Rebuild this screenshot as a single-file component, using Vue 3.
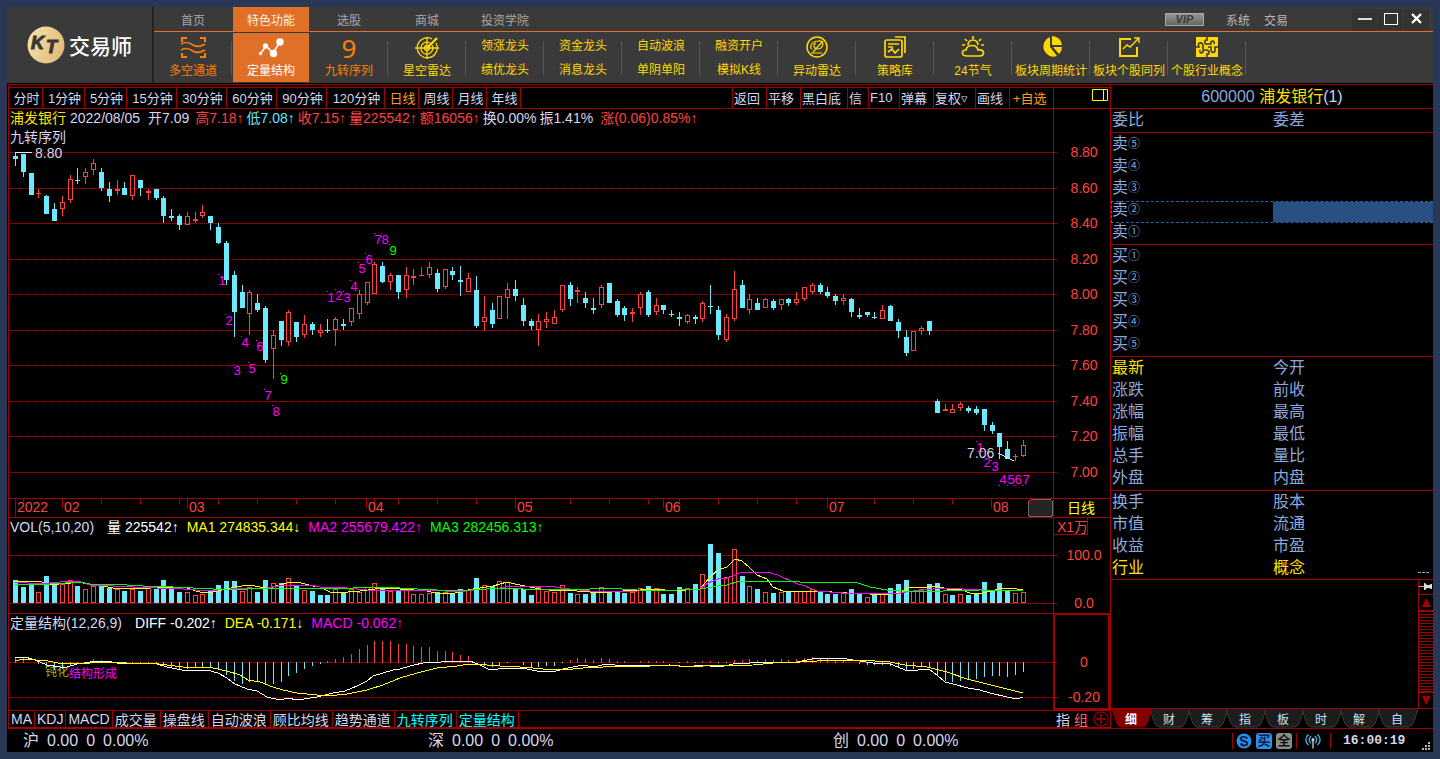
<script setup>
const navTabs = ['首页', '特色功能', '选股', '商城', '投资学院']

const tiles = [
  { icon: 'channel', label: '多空通道', tone: 'orange' },
  { icon: 'nodes', label: '定量结构', tone: 'active' },
  { icon: 'nine', label: '九转序列', tone: 'orange' },
  { icon: 'radar', label: '星空雷达' },
  { lines: ['领涨龙头', '绩优龙头'] },
  { lines: ['资金龙头', '消息龙头'] },
  { lines: ['自动波浪', '单阴单阳'] },
  { lines: ['融资开户', '模拟K线'] },
  { icon: 'alert', label: '异动雷达' },
  { icon: 'library', label: '策略库' },
  { icon: 'weather', label: '24节气' },
  { icon: 'pie', label: '板块周期统计' },
  { icon: 'trend', label: '板块个股同列' },
  { icon: 'puzzle', label: '个股行业概念' }
]

const periods = [
  ['分时', 'w34'], ['1分钟', 'w42'], ['5分钟', 'w42'], ['15分钟', 'w50'], ['30分钟', 'w50'],
  ['60分钟', 'w50'], ['90分钟', 'w50'], ['120分钟', 'w58'], ['日线', 'w34 on'],
  ['周线', 'w34'], ['月线', 'w34'], ['年线', 'w34']
]
const actions = [
  ['返回', 'w34'], ['平移', 'w34'], ['黑白底', 'w47'], ['信', 'w21'], ['F10', 'w31'],
  ['弹幕', 'w34'], ['复权▿', 'w42'], ['画线', 'w34'], ['+自选', 'w44 on']
]

/* [direction, high, body top, body bottom, low]; 0 = down, 1 = up */
const candles = [
  [0, 152, 156, 159, 166], [0, 154, 154, 172, 177], [0, 173, 173, 195, 195], [1, 189, 193, 194, 198], [0, 195, 196, 214, 214],
  [0, 203, 209, 221, 221], [1, 196, 202, 209, 216], [1, 175, 179, 200, 203], [0, 168, 180, 181, 184], [1, 168, 172, 177, 184],
  [1, 159, 163, 170, 175], [0, 168, 172, 188, 191], [0, 182, 189, 196, 202], [1, 180, 189, 191, 195], [0, 182, 188, 195, 195],
  [1, 175, 175, 196, 200], [0, 180, 180, 188, 196], [1, 189, 191, 193, 200], [0, 189, 189, 198, 200], [0, 196, 198, 216, 223],
  [0, 209, 216, 218, 221], [0, 214, 216, 225, 230], [1, 212, 216, 225, 225], [1, 212, 219, 221, 223], [1, 205, 212, 216, 218],
  [0, 216, 216, 223, 230], [0, 223, 227, 243, 244], [0, 241, 243, 280, 285], [0, 271, 275, 312, 337], [0, 285, 292, 308, 308],
  [1, 290, 292, 314, 335], [0, 294, 303, 310, 312], [0, 306, 308, 360, 363], [1, 330, 335, 349, 379], [0, 321, 321, 340, 346],
  [1, 310, 312, 342, 346], [0, 322, 322, 337, 342], [1, 315, 324, 335, 338], [0, 322, 324, 330, 335], [1, 324, 330, 333, 337],
  [0, 319, 330, 331, 333], [1, 317, 319, 330, 346], [0, 319, 324, 326, 330], [1, 308, 308, 322, 326], [1, 290, 294, 314, 319],
  [1, 282, 282, 303, 305], [1, 262, 264, 294, 294], [0, 262, 266, 282, 283], [1, 273, 275, 282, 290], [0, 275, 275, 292, 299],
  [1, 267, 275, 290, 298], [1, 269, 276, 278, 285], [1, 267, 275, 276, 276], [1, 262, 267, 275, 278], [0, 269, 273, 289, 292],
  [1, 269, 269, 287, 289], [0, 267, 271, 275, 280], [0, 266, 280, 282, 296], [1, 273, 278, 292, 292], [0, 276, 290, 326, 328],
  [1, 296, 317, 322, 331], [0, 303, 310, 324, 328], [1, 296, 296, 319, 319], [1, 283, 289, 298, 319], [0, 280, 289, 296, 301],
  [0, 298, 305, 321, 326], [0, 319, 321, 326, 330], [1, 314, 321, 330, 346], [1, 312, 319, 322, 328], [1, 310, 317, 324, 324],
  [1, 285, 285, 310, 312], [0, 282, 285, 299, 306], [1, 287, 290, 292, 303], [0, 292, 298, 303, 308], [0, 298, 308, 310, 314],
  [1, 285, 287, 305, 308], [0, 283, 283, 303, 303], [0, 299, 301, 315, 317], [0, 306, 308, 315, 321], [1, 308, 312, 314, 322],
  [1, 292, 294, 308, 315], [0, 290, 292, 315, 317], [1, 298, 305, 312, 315], [0, 305, 305, 310, 314], [0, 310, 314, 315, 317],
  [0, 312, 317, 319, 326], [1, 314, 315, 322, 324], [0, 315, 317, 319, 324], [1, 301, 303, 319, 322], [0, 285, 306, 307, 314],
  [0, 306, 310, 335, 340], [1, 314, 317, 340, 342], [1, 271, 289, 319, 321], [0, 280, 285, 308, 308], [1, 294, 299, 310, 314],
  [0, 298, 303, 310, 310], [1, 298, 299, 308, 308], [0, 299, 301, 308, 310], [1, 299, 299, 305, 310], [0, 298, 299, 303, 306],
  [1, 292, 299, 303, 305], [1, 287, 287, 299, 301], [1, 283, 285, 292, 294], [0, 283, 285, 292, 294], [0, 287, 292, 296, 298],
  [0, 294, 296, 301, 305], [1, 294, 298, 301, 305], [0, 298, 299, 312, 317], [0, 308, 315, 317, 319], [0, 312, 312, 315, 317],
  [0, 312, 317, 318, 319], [1, 305, 310, 319, 319], [0, 305, 306, 321, 321], [0, 319, 322, 331, 338], [0, 330, 337, 353, 356],
  [1, 331, 331, 351, 351], [1, 326, 328, 331, 335], [0, 321, 321, 331, 335], [0, 399, 401, 413, 413], [1, 404, 409, 411, 411],
  [1, 404, 409, 413, 413], [1, 402, 404, 408, 411], [0, 406, 408, 411, 413], [0, 406, 409, 413, 415], [0, 409, 409, 425, 431],
  [0, 422, 425, 431, 434], [0, 433, 433, 447, 459], [0, 441, 449, 459, 459], [1, 454, 456, 457, 461], [1, 440, 445, 456, 457]
]

const volumes = [
  23, 16, 20, 11, 27, 21, 19, 23, 17, 14, 17, 18, 15, 14, 12, 14, 12, 16, 14, 23, 14, 11, 11, 8, 9, 12, 18, 22, 22, 12,
  16, 11, 23, 20, 20, 25, 18, 13, 12, 8, 8, 14, 11, 14, 11, 16, 20, 14, 12, 13, 14, 9, 9, 10, 11, 11, 10, 14, 13, 25,
  18, 17, 22, 21, 14, 14, 8, 16, 12, 11, 18, 10, 9, 9, 11, 16, 11, 11, 10, 11, 15, 17, 15, 9, 9, 16, 15, 19, 29, 59,
  50, 26, 54, 27, 17, 14, 11, 10, 11, 11, 12, 12, 14, 11, 9, 9, 10, 14, 10, 6, 9, 9, 15, 19, 23, 12, 14, 19, 20, 9,
  8, 9, 8, 10, 21, 12, 20, 12, 10, 11
]
const volumeFlips = { 29: 1, 39: 0, 109: 1, 120: 0 }

const macd = [
  5, 4, 0, -2, -6, -8, -7, -3, -2, 0, 3, 2, 0, 0, -1, -1, -1, -1, -2, -4, -5, -7, -7, -6, -5, -5, -7, -13, -19, -22,
  -20, -19, -23, -22, -20, -14, -11, -7, -4, -2, 1, 3, 5, 8, 13, 17, 21, 21, 21, 18, 18, 16, 15, 15, 11, 11, 10, 7, 6, 0,
  -4, -5, -4, -1, 0, -3, -5, -5, -4, -4, -1, 2, 4, 3, 2, 4, 3, 1, 1, 0, 1, 1, 1, 1, 0, -1, 1, -1, 1, 1,
  -1, -1, 2, 2, 3, 2, 3, 2, 3, 2, 3, 4, 5, 4, 3, 1, 1, 0, -2, -3, -3, -3, -4, -5, -8, -7, -5, -5, -14, -19,
  -20, -19, -18, -17, -15, -14, -14, -15, -13, -10
]

const barX = (i) => Math.round(14.98 + i * 7.8125)

const bars = candles.map(([up, high, top, bottom, low], i) => ({
  x: barX(i), up, high, top, low, h: bottom - top
}))
const volBars = volumes.map((h, i) => ({
  x: barX(i), h, up: i in volumeFlips ? volumeFlips[i] : candles[i][0]
}))
const macdBars = macd.map((v, i) => ({ x: barX(i), v })).filter((b) => b.v !== 0)

const priceTicks = [
  [152, '8.80'], [188, '8.60'], [223, '8.40'], [259, '8.20'], [294, '8.00'],
  [330, '7.80'], [365, '7.60'], [401, '7.40'], [436, '7.20'], [472, '7.00']
]

/* sequence counters: [text, x, y] */
const marks = [
  ['1', 222, 280], ['2', 229, 320], ['3', 237, 370], ['4', 245, 342], ['5', 252, 368], ['6', 260, 346],
  ['7', 268, 395], ['8', 276, 411], ['9', 284, 379],
  ['1', 331, 297], ['2', 339, 295], ['3', 347, 297], ['4', 354, 286], ['5', 362, 268], ['6', 369, 259],
  ['7', 378, 239], ['8', 385, 239], ['9', 393, 250],
  ['1', 980, 447], ['2', 987, 462], ['3', 995, 466], ['4', 1003, 479], ['5', 1011, 479], ['6', 1018, 479], ['7', 1026, 479]
]

const months = [
  [62, '02'], [187, '03'], [366, '04'], [515, '05'], [663, '06'], [827, '07'], [991, '08']
]
const weekTicks = [
  23, 62, 101, 140, 179, 218, 257, 296, 335, 374, 398, 437, 476, 531, 570, 609, 648, 679,
  718, 757, 796, 835, 874, 913, 952, 1030
]

const volMa1 = '15,581 40,581 47,585 71,583 80,582 90,585 103,586 113,588 143,589 157,587 187,588 193,590 200,592 213,592 227,589 235,587 250,585 260,587 273,587 290,582 297,582 313,586 320,587 330,592 348,592 360,591 383,588 400,589 427,591 435,593 445,594 455,593 473,589 493,586 507,582 515,584 525,586 540,589 557,591 570,590 577,591 590,592 612,592 623,591 657,589 673,591 700,589 710,577 718,570 727,567 735,559 742,561 750,568 757,575 767,579 773,587 783,591 795,592 817,591 847,593 870,594 890,594 902,592 908,588 927,587 937,586 947,589 962,590 970,593 977,594 987,592 1003,588 1017,589 1023,590'
const volMa2 = '15,582 40,584 70,581 78,581 90,585 113,586 133,587 157,588 183,589 207,591 230,589 247,588 267,588 283,585 310,585 320,587 347,588 367,590 400,590 433,590 457,592 473,590 500,588 513,586 547,586 570,589 590,591 637,591 677,590 700,589 708,583 718,579 727,578 740,573 750,572 767,572 778,575 795,583 805,586 817,591 843,593 880,593 900,593 913,591 943,588 963,589 983,590 1007,590 1023,591'
const volMa3 = '15,585 27,584 50,584 80,582 90,584 113,584 127,585 143,586 173,587 213,589 247,589 267,588 327,588 353,588 373,587 400,588 417,589 457,591 470,590 487,589 507,588 523,589 590,589 607,588 637,590 677,590 700,589 718,586 727,585 740,581 790,581 800,582 855,582 870,587 887,590 903,591 943,591 980,590 1023,591'
const diffLine = '15,657 25,657 32,659 40,662 47,665 60,667 67,667 77,664 97,661 107,661 117,663 147,663 157,664 167,667 182,670 197,671 207,670 218,673 227,678 235,684 247,689 257,691 267,697 280,700 288,698 297,700 317,697 325,695 333,693 345,691 357,686 367,681 373,676 383,673 393,670 400,669 410,666 427,662 437,663 445,661 470,661 480,665 490,670 507,668 522,668 537,671 553,672 563,669 583,665 593,667 607,664 623,666 670,665 687,667 702,665 710,666 720,667 733,664 750,663 780,662 797,662 812,659 840,658 853,660 873,663 890,664 898,667 905,670 918,670 929,669 937,675 945,682 953,684 968,688 980,690 990,693 1007,697 1017,699 1023,697'
const deaLine = '15,661 23,659 48,661 58,663 73,664 107,662 127,663 150,663 167,665 183,667 213,668 227,671 240,675 248,680 260,682 273,687 283,690 297,693 317,695 337,695 347,694 367,690 383,685 400,678 417,673 437,668 457,666 470,664 487,665 500,666 520,667 533,668 553,670 573,669 583,668 603,667 617,666 630,667 670,665 690,667 703,666 753,665 773,663 800,662 817,661 843,660 860,660 890,662 905,665 927,667 947,672 967,679 987,684 1007,689 1023,693'

const indicators = [
  ['MA', 'latin'], ['KDJ', 'latin'], ['MACD', 'latin'], ['成交量', ''], ['操盘线', ''], ['自动波浪', ''],
  ['顾比均线', ''], ['趋势通道', ''], ['九转序列', 'on'], ['定量结构', 'on']
]

const asks = ['⑤', '④', '③', '②', '①']
const bids = ['①', '②', '③', '④', '⑤']
const stats = [['最新', '今开'], ['涨跌', '前收'], ['涨幅', '最高'], ['振幅', '最低'], ['总手', '量比'], ['外盘', '内盘']]
const profile = [['换手', '股本'], ['市值', '流通'], ['收益', '市盈'], ['行业', '概念']]
const sideTabs = ['细', '财', '筹', '指', '板', '时', '解', '自']
const markets = ['沪', '深', '创']
</script>

<template>
  <div class="frame">
    <div class="window">
      <header class="head">
        <div class="brand">
          <svg width="39" height="40" viewBox="0 0 39 40" aria-hidden="true">
            <defs>
              <linearGradient id="gold" x1="0" y1="0" x2="1" y2="0.4">
                <stop offset="0" stop-color="#f5e6ae" />
                <stop offset="1" stop-color="#e3bc7c" />
              </linearGradient>
            </defs>
            <circle cx="19" cy="20" r="18.500" fill="url(#gold)" />
            <text class="logo" x="4" y="24">K</text>
            <text class="logo" x="19" y="28">T</text>
          </svg>
          <span>交易师</span>
        </div>
        <div class="head-main">
          <div class="nav">
            <button v-for="(t, i) in navTabs" :key="t" :class="['nav-tab', { on: i === 1 }]">{{ t }}</button>
            <div class="nav-right">
              <button class="vip">VIP</button>
              <button class="sys">系统</button>
              <button class="sys">交易</button>
              <div class="win">
                <button aria-label="最小化"><svg width="25" height="21" viewBox="0 0 25 21"><path d="M6 10 H20" stroke="#ddd" stroke-width="2" /></svg></button>
                <button aria-label="最大化"><svg width="25" height="21" viewBox="0 0 25 21"><rect x="6.500" y="4.500" width="13" height="11" fill="none" stroke="#fff" /></svg></button>
                <button aria-label="关闭"><svg width="25" height="21" viewBox="0 0 25 21"><path d="M8 5 L17 14 M17 5 L8 14" stroke="#fff" stroke-width="2.400" /></svg></button>
              </div>
            </div>
          </div>
          <div class="tiles">
            <button v-for="(t, i) in tiles" :key="i" :class="['tile', t.tone]">
              <template v-if="t.lines">
                <span v-for="l in t.lines" :key="l" class="tile-line">{{ l }}</span>
              </template>
              <template v-else>
                <span v-if="t.icon === 'nine'" class="nine" aria-hidden="true">9</span>
                <svg v-else width="26" height="24" viewBox="0 0 26 24" fill="none" stroke="currentColor" aria-hidden="true">
                  <g v-if="t.icon === 'channel'" stroke-width="2">
                    <path d="M2 7 V3 H7 M20 3 H25 V7 M2 18 V22 H7 M20 22 H25 V18" />
                    <path d="M1 9 C6 6 10 8 13 10 S20 12 25 9 M1 15 C6 12 10 14 13 16 S20 18 25 15" stroke-width="1.600" />
                  </g>
                  <g v-else-if="t.icon === 'nodes'" stroke-width="1.600">
                    <path d="M3 18 L8 11 L15 18 L22 7" />
                    <g fill="currentColor" stroke="none"><circle cx="2.500" cy="18.500" r="1.700" /><circle cx="7.500" cy="11" r="2.700" /><circle cx="15.500" cy="18.500" r="3.700" /><circle cx="22" cy="7" r="3.700" /></g>
                  </g>
                  <g v-else-if="t.icon === 'radar'" stroke-width="1.300">
                    <path d="M18 4 A10 10 0 1 0 22 8 M16 8 A6 6 0 1 0 18 10" />
                    <circle cx="13" cy="13" r="2.500" />
                    <path d="M1 13 H25 M13 2 V24" />
                    <path d="M13 13 L23 3" stroke-width="2.400" />
                  </g>
                  <g v-else-if="t.icon === 'alert'" stroke-width="1.500">
                    <circle cx="13" cy="12" r="10" />
                    <path d="M8 14 C5 12 8 6 14 6 C21 5 20 13 14 14 C9 14 9 9 12 8 M7 18 H18 M9 17 L19 6" stroke-width="1.200" />
                  </g>
                  <g v-else-if="t.icon === 'library'" stroke-width="1.700">
                    <path d="M13 2 H23 V18" />
                    <rect x="3" y="5" width="17" height="17" rx="2" />
                    <path d="M6 9 H17 M6 12 H11 M6 17 L10 14 L13 18 L17 14" />
                  </g>
                  <g v-else-if="t.icon === 'weather'" stroke-width="1.700">
                    <path d="M7 21 C1 21 1 15 6 15 C7 9 17 9 18 15 C25 14 25 21 20 21 Z" />
                    <path d="M8 10 A5 5 0 0 1 18 10 M13 1 V4 M5 4 L7 6 M21 4 L19 6 M2 10 H5 M21 10 H24" />
                  </g>
                  <g v-else-if="t.icon === 'pie'" fill="currentColor" stroke="none">
                    <path d="M12 2 A10 10 0 1 0 19 21 L12 12 Z" />
                    <path d="M14 1 A10 10 0 0 1 24 10 H14 Z" />
                    <path d="M15 12 H24 A10 10 0 0 1 21 19 Z" />
                  </g>
                  <g v-else-if="t.icon === 'trend'" stroke-width="2">
                    <path d="M15 4 H4 V21 H21 V12" />
                    <path d="M7 14 L11 10 L14 12 L22 4 M18 3 H23 V8" stroke-width="1.400" />
                  </g>
                  <g v-else>
                    <rect x="2" y="2" width="22" height="20" fill="currentColor" stroke="none" />
                    <path d="M13 2 V5 C10 4 10 10 13 9 H17 C16 5 21 5 20 9 M2 12 H5 C2 7 10 6 9 12 V14 M24 12 H21 V16 C21 18 17 18 17 15 V12 H14 M13 22 V19 C16 20 16 15 12 15 H9 C10 19 5 19 6 15" stroke="#3a3a3a" stroke-width="1.600" />
                  </g>
                </svg>
                <span class="tile-label">{{ t.label }}</span>
              </template>
            </button>
          </div>
        </div>
      </header>

      <main class="work">
        <section class="charts">
          <div class="toolbar">
            <button v-for="[t, c] in periods" :key="t" :class="['period', c]">{{ t }}</button>
            <i class="fill"></i>
            <button v-for="[t, c] in actions" :key="t" :class="['action', c]">{{ t }}</button>
            <button class="split" aria-label="分栏">
              <svg width="17" height="13" viewBox="0 0 17 13" fill="none" stroke="#ffff00"><path d="M0.500 0.500 H15.500 V11.500 H0.500 Z M11.500 0.500 V11.500" /></svg>
            </button>
          </div>

          <div class="pane">
            <div class="legend quote">
              <span class="gold">浦发银行</span><span class="date">2022/08/05</span><span class="open">开7.09</span>
              <span class="red">高7.18↑</span><span class="cyan">低7.08↑</span><span class="red">收7.15↑</span>
              <span class="red">量225542↑</span><span class="red">额16056↑</span><span>换0.00%</span><span>振1.41%</span>
              <span class="red change">涨(0.06)0.85%↑</span>
            </div>
            <div class="legend second">九转序列</div>
            <svg class="plot" viewBox="9 109 1101 389">
              <g class="grid">
                <path v-for="[y] in priceTicks" :key="y" :d="`M10 ${y}.5 H1053`" />
              </g>
              <path class="rule" d="M1053.500 109 V498" />
              <path v-for="[y] in priceTicks" :key="y" class="rule" :d="`M1054 ${y}.5 H1057`" />
              <text v-for="[y, t] in priceTicks" :key="t" class="axis" x="1084" :y="y + 5" text-anchor="middle">{{ t }}</text>
              <g v-for="b in bars" :key="b.x" :class="b.up ? 'up' : 'down'">
                <path v-if="b.top > b.high" :d="`M${b.x}.5 ${b.high} V${b.top}`" />
                <path v-if="b.low > b.top + b.h" :d="`M${b.x}.5 ${b.top + b.h} V${b.low}`" />
                <rect v-if="b.up && b.h > 2" :x="b.x - 1.5" :y="b.top + 0.5" width="4" :height="b.h - 1" />
                <rect v-else class="solid" :x="b.x - 2" :y="b.top" width="5" :height="b.h" />
              </g>
              <g v-for="(m, i) in marks" :key="i" :class="m[0] === '9' ? 'mark nine-mark' : 'mark'">
                <text :x="m[1]" :y="m[2] + 5" text-anchor="middle">{{ m[0] }}</text>
                <rect :x="m[1] - 4" :y="i > 20 ? m[2] + 6 : m[2] - 6" width="1" height="1" />
              </g>
              <path class="pointer" d="M15 152.500 H32 M998 453 L1014 461" />
              <text class="note" x="35" y="158">8.80</text>
              <text class="note" x="967" y="458">7.06</text>
            </svg>
          </div>

          <div class="pane">
            <svg class="plot" viewBox="9 499 1101 18">
              <path class="rule" d="M15.500 499 V517 M1053.500 499 V517" />
              <path v-for="x in weekTicks" :key="x" class="rule" :d="`M${x}.5 499 V504`" />
              <path v-for="[x] in months" :key="x" class="rule" :d="`M${x}.5 499 V508`" />
              <text class="axis" x="17" y="512">2022</text>
              <text v-for="[x, t] in months" :key="t" class="axis" :x="x + 2" y="512">{{ t }}</text>
              <rect x="1028.500" y="499.500" width="24" height="17" rx="3" fill="#242424" stroke="#686868" />
              <path class="rule" d="M1030.500 499 V504" />
              <text class="unit" x="1067" y="513">日线</text>
            </svg>
          </div>

          <div class="pane">
            <div class="legend">
              <span class="name">VOL(5,10,20)</span><span class="white">量 225542↑</span><span class="yellow">MA1 274835.344↓</span>
              <span class="magenta">MA2 255679.422↑</span><span class="green">MA3 282456.313↑</span>
            </div>
            <svg class="plot" viewBox="9 518 1101 95">
              <path class="grid" d="M10 555.500 H1053 M10 603.500 H1053" />
              <path class="rule" d="M1053.500 518 V613 M1054 555.500 H1057 M1054 603.500 H1057 M1054 534.500 H1087.500 V518" />
              <text class="axis" x="1057" y="532">X1万</text>
              <text class="axis" x="1084" y="560" text-anchor="middle">100.0</text>
              <text class="axis" x="1084" y="608" text-anchor="middle">0.0</text>
              <g v-for="b in volBars" :key="b.x" :class="b.up ? 'up' : 'down'">
                <rect v-if="b.up" :x="b.x - 1.5" :y="603.5 - b.h" width="4" :height="b.h - 1" />
                <rect v-else class="solid" :x="b.x - 2" :y="603 - b.h" width="5" :height="b.h" />
              </g>
              <polyline class="line y" :points="volMa1" />
              <polyline class="line m" :points="volMa2" />
              <polyline class="line g" :points="volMa3" />
            </svg>
          </div>

          <div class="pane">
            <div class="legend">
              <span class="name">定量结构(12,26,9)</span><span class="white">DIFF -0.202↑</span><span class="yellow">DEA -0.171↓</span>
              <span class="magenta">MACD -0.062↑</span>
            </div>
            <svg class="plot" viewBox="9 614 1101 96">
              <path class="grid" d="M10 662.500 H1053 M10 697.500 H1053" />
              <rect x="1054" y="614" width="55" height="95" fill="none" stroke="#a00000" stroke-width="2" />
              <path class="rule" d="M1054 662.500 H1057 M1054 697.500 H1057" />
              <text class="axis" x="1084" y="667" text-anchor="middle">0</text>
              <text class="axis" x="1084" y="702" text-anchor="middle">-0.20</text>
              <path v-for="b in macdBars" :key="b.x" :class="b.v > 0 ? 'up' : 'down'" :d="`M${b.x}.5 ${b.v > 0 ? 663 : 662} V${662 - b.v}`" />
              <text class="tag dim" x="45" y="676">钝化</text>
              <text class="tag" x="69" y="678">结构形成</text>
              <polyline class="line w" :points="diffLine" />
              <polyline class="line y" :points="deaLine" />
            </svg>
          </div>

          <div class="indicators">
            <button v-for="[t, c] in indicators" :key="t" :class="c">{{ t }}</button>
            <i class="fill"></i>
            <button class="plain">指</button>
            <button class="plain pink">组</button>
            <button class="plain add" aria-label="添加">
              <svg width="16" height="16" viewBox="0 0 16 16" fill="none" stroke="#800010"><circle cx="8" cy="8" r="7" stroke-width="1.500" /><path d="M3 8 H13 M8 3 V13" stroke-width="2" /></svg>
            </button>
          </div>
        </section>

        <aside class="side">
          <h1><span class="code">600000</span> <span class="gold">浦发银行</span>(1)</h1>
          <table class="block"><tbody><tr><th>委比</th><th>委差</th></tr></tbody></table>
          <table class="block">
            <tbody>
              <tr v-for="n in asks" :key="n">
                <th>卖<small>{{ n }}</small></th><th></th>
                <td v-if="n === '②'" class="cursor"><i></i></td>
              </tr>
            </tbody>
          </table>
          <table class="block">
            <tbody><tr v-for="n in bids" :key="n"><th>买<small>{{ n }}</small></th><th></th></tr></tbody>
          </table>
          <table class="block">
            <tbody><tr v-for="(r, i) in stats" :key="r[0]"><th :class="{ gold: i === 0 }">{{ r[0] }}</th><th>{{ r[1] }}</th></tr></tbody>
          </table>
          <div class="profile">
            <table>
              <tbody><tr v-for="(r, i) in profile" :key="r[0]" :class="{ gold: i === 3 }"><th>{{ r[0] }}</th><th>{{ r[1] }}</th></tr></tbody>
            </table>
            <i class="more"></i>
          </div>
          <div class="detail">
            <div class="scroll">
              <button class="pin" aria-label="固定">
                <svg width="14" height="14" viewBox="0 0 14 14"><path d="M0 6.500 H5" stroke="#aaa" /><path d="M5 3 V10 H6 L8 8 H10 L12 9 H13 V4 H12 L10 5 H8 L6 3 Z" fill="#ddd" /></svg>
              </button>
              <button class="arrow up-arrow" aria-label="向上"><svg width="14" height="15" viewBox="0 0 14 15"><path d="M7 3 L12 12 H3 Z" fill="#a00000" /></svg></button>
              <div class="track"></div>
              <button class="arrow down-arrow" aria-label="向下"><svg width="14" height="15" viewBox="0 0 14 15"><path d="M3 3 H12 L7 12 Z" fill="#a00000" /></svg></button>
            </div>
          </div>
          <div class="side-tabs">
            <button v-for="(t, i) in sideTabs" :key="t" :class="{ on: i === 0 }">
              <svg width="42" height="19" viewBox="0 0 42 19" aria-hidden="true">
                <path d="M1 0 C4 8 5 17 10 18 H32 C37 17 38 8 41 0" :fill="i === 0 ? '#820000' : '#1c1c1c'" :stroke="i === 0 ? '#820000' : '#3c3c3c'" />
              </svg>
              <span>{{ t }}</span>
            </button>
          </div>
        </aside>
      </main>

      <footer class="status">
        <div v-for="m in markets" :key="m" class="market"><span>{{ m }}</span><span>0.00</span><span>0</span><span>0.00%</span></div>
        <div class="tray">
          <svg width="16" height="16" viewBox="0 0 17 17"><circle cx="8.500" cy="8.500" r="8" fill="#2f8ee8" /><path d="M12 6 C10 3 5 4 5 6 C5 9 12 8 12 11 C12 14 6 14 5 11" fill="none" stroke="#06204a" stroke-width="2" /></svg>
          <b class="chip buy">买</b>
          <b class="chip all">全</b>
          <i class="bar"></i>
          <svg width="16" height="16" viewBox="0 0 18 17" fill="none" stroke="#46a8d0" stroke-width="1.600"><path d="M4 1 C0 4 0 10 4 13 M14 1 C18 4 18 10 14 13 M7 3 C4 5 4 9 7 11 M11 3 C14 5 14 9 11 11" /><path d="M9 8 V17" stroke="#999" stroke-width="2" /><circle cx="9" cy="7" r="1" stroke="#ccc" /></svg>
          <i class="bar"></i>
          <time>16:00:19</time>
        </div>
        <svg class="grip" width="9" height="9" viewBox="0 0 9 9" fill="#b8b8b8" aria-hidden="true"><path d="M6 0 h2 v2 h-2z M3 3 h2 v2 h-2z M6 3 h2 v2 h-2z M0 6 h2 v2 h-2z M3 6 h2 v2 h-2z M6 6 h2 v2 h-2z" /></svg>
      </footer>
    </div>
  </div>
</template>

<style>
body { background: #2a3857; }
</style>

<style scoped>
* { box-sizing: border-box; }
.frame {
  padding: 7px;
  background: #2a3857;
  font-family: "Liberation Sans", "Noto Sans CJK SC", sans-serif;
  color: #d6d6ee;
}
.window { background: #000; }
button {
  display: flex;
  align-items: center;
  justify-content: center;
  margin: 0;
  padding: 0;
  border: 0;
  background: none;
  color: inherit;
  font: inherit;
  white-space: nowrap;
}
svg { display: block; }
.fill { flex: 1; }

.head { display: flex; height: 76px; background: #3a3a3a; }
.brand {
  display: flex;
  align-items: center;
  flex: none;
  width: 147px;
  gap: 3px;
  padding-left: 20px;
  border-right: 2px solid #222;
  color: #fff;
  font-size: 21px;
  font-weight: 500;
  white-space: nowrap;
}
.logo { font-size: 18px; font-weight: bold; font-style: italic; fill: #3a3630; stroke: #3a3630; stroke-width: 1px; }
.head-main { flex: 1; min-width: 0; font-size: 12px; }
.nav { display: flex; height: 25px; border-bottom: 1px solid #e07028; color: #a8a8a8; }
.nav-tab { width: 76px; margin: 0 1px; }
.nav-tab.on { background: #e07028; color: #fff0e0; }
.nav-right { display: flex; margin-left: auto; align-items: center; }
.vip {
  width: 39px;
  height: 13px;
  margin-right: 22px;
  border: 1px solid #a8a8a8;
  background: linear-gradient(#969696, #666);
  color: #3a3a3a;
  font-size: 11px;
  font-weight: bold;
  font-style: italic;
}
.sys { margin-right: 14px; color: #b8b8b8; }
.win { display: flex; gap: 1px; margin-left: 50px; padding-right: 4px; }
.win button { background: #333; }
.tiles { display: flex; padding-top: 1px; }
.tile {
  position: relative;
  flex-direction: column;
  justify-content: flex-start;
  width: 76px;
  height: 49px;
  margin: 0 1px;
  padding-top: 2px;
  color: #ffd800;
}
.tile::after { content: ""; position: absolute; right: -1px; top: 8px; width: 1px; height: 34px; background: #585858; }
.tile.orange { color: #ff7d08; }
.tile.active { background: #e07028; color: #fff; }
.tile.active::after { display: none; }
.tile-label { line-height: 18px; margin-top: 3px; }
.tile-line { line-height: 24px; margin-top: -1px; }
.tile-line + .tile-line { margin-top: 0; }
.nine { height: 24px; font-family: "Noto Sans", sans-serif; font-size: 26px; line-height: 26px; }

.work {
  display: grid;
  grid-template-columns: minmax(0, 1fr) 323px;
  margin: 1px 0 0 1px;
  border-top: 1px solid #a00000;
  border-left: 1px solid #a00000;
}
.charts { margin-top: 2px; border-top: 1px solid #a00000; }
.toolbar { display: flex; height: 21px; border-bottom: 1px solid #a00000; font-size: 13px; }
.period, .action { flex: none; padding-bottom: 1px; border-right: 1px solid #a00000; }
.period { padding-left: 2px; }
.action { justify-content: flex-start; padding-left: 1px; }
.toolbar .fill { border-right: 1px solid #a00000; }
.w21 { width: 21px; }
.w31 { width: 31px; }
.w34 { width: 34px; }
.w42 { width: 42px; }
.w44 { width: 44px; padding-left: 3px; }
.w47 { width: 47px; }
.w50 { width: 50px; }
.w58 { width: 58px; }
.toolbar .on { color: #ff9c18; }
.split { flex: none; width: 56px; padding: 0 0 5px 38px; justify-content: flex-start; }

.pane { position: relative; border-bottom: 1px solid #a00000; }
.plot { width: 100%; height: auto; shape-rendering: crispEdges; font-size: 14px; }
.legend {
  position: absolute;
  top: 0;
  left: 1px;
  display: flex;
  gap: 8px;
  font-size: 14px;
  line-height: 19px;
  white-space: nowrap;
}
.quote { gap: 3px; }
.second { top: 19px; }
.date { margin: 0 5px 0 1px; }
.open { margin-right: 3px; }
.change { margin-left: 4px; }
.name { margin-right: 5px; }
.gold { color: #ffe000; }
.red { color: #ff4040; }
.cyan { color: #66e8ff; }
.white { color: #fff; }
.yellow { color: #ffff00; }
.magenta { color: #ff00ff; }
.green { color: #00ff00; }
.grid { fill: none; stroke: #a00000; stroke-dasharray: 1 1; }
.rule { fill: none; stroke: #a00000; }
.axis { fill: #ff4040; }
.unit { fill: #ffff00; }
.up { fill: none; stroke: #ff4040; }
.up .solid { fill: #ff4040; stroke: none; }
.down { fill: none; stroke: #6ae9ff; }
.down .solid { fill: #6ae9ff; stroke: none; }
.mark { fill: #ff00ff; font-size: 13px; }
.nine-mark { fill: #00ff00; }
.pointer { fill: none; stroke: #e6e6f6; }
.note { fill: #d6d6ee; }
.line { fill: none; stroke-width: 1px; }
.line.y { stroke: #ffff00; }
.line.m { stroke: #ff00ff; }
.line.g { stroke: #00ff00; }
.line.w { stroke: #fff; }
.tag { fill: #ff00ff; font-size: 12px; }
.tag.dim { fill: #a8a800; }

.indicators { display: flex; height: 18px; border-bottom: 2px solid #a00000; font-size: 14px; }
.indicators button { padding: 0 3px 0 2px; border-right: 1px solid #a00000; }
.indicators .latin { padding: 0 2px; }
.indicators .on { color: #00ffff; }
.indicators .plain { border: 0; padding: 0 2px; }
.indicators .pink { color: #ff6070; }
.indicators .add { padding: 0 1px 0 3px; }

.side { display: flex; flex-direction: column; min-width: 0; border-left: 1px solid #a00000; border-bottom: 1px solid #a00000; color: #8ea8dc; }
.side h1 {
  margin: 0;
  height: 24px;
  border-bottom: 1px solid #a00000;
  color: #c8d4f4;
  font-size: 16px;
  font-weight: normal;
  line-height: 23px;
  text-align: center;
}
.side .code { color: #8ea8dc; }
.side .gold, .side .gold th { color: #ffe000; }
table { display: block; }
tbody { display: block; }
tr { position: relative; display: grid; grid-template-columns: 1fr 1fr; height: 22px; }
th { padding: 0 0 0 1px; font-size: 16px; font-weight: normal; line-height: 21px; text-align: left; white-space: nowrap; }
th small { font-size: 12px; vertical-align: 1px; color: #7ca4dc; }
.block { padding-bottom: 1px; border-bottom: 1px solid #a00000; }
.cursor { position: absolute; left: 0; right: 0; top: 2px; height: 22px; padding: 0; border: 1px dashed #2c64b4; border-right: 0; }
.cursor i { display: block; width: 50%; height: 20px; margin-left: 50%; background: #2a4f82; }
.profile { position: relative; border-bottom: 1px solid #a00000; }
.more { position: absolute; right: 4px; bottom: 6px; width: 11px; height: 1px; background: repeating-linear-gradient(90deg, #8ea8dc 0 3px, #000 3px 4px); }
.detail { display: flex; flex: 1; justify-content: flex-end; }
.scroll { display: flex; flex-direction: column; width: 15px; border-left: 1px solid #a00000; }
.scroll .pin { height: 15px; border-bottom: 1px solid #a00000; }
.arrow { height: 17px; }
.up-arrow { border-bottom: 2px solid #a00000; }
.down-arrow { border-top: 2px solid #a00000; }
.track { flex: 1; background: repeating-linear-gradient(#000 0 2px, #a00000 2px 3px); }
.side-tabs { display: flex; height: 20px; border-top: 1px solid #a00000; font-size: 12px; color: #c4e0f4; }
.side-tabs button { position: relative; width: 38px; padding-left: 2px; }
.side-tabs svg { position: absolute; left: 0; top: 0; }
.side-tabs span { position: relative; }
.side-tabs .on { z-index: 1; color: #fff; font-weight: bold; }

.status { position: relative; display: flex; height: 23px; font-size: 16px; line-height: 23px; }
.market { display: flex; flex: 0 1 405px; gap: 8px; padding-left: 16px; white-space: nowrap; }
.tray { display: flex; flex: 1; align-items: center; gap: 4px; margin-left: 10px; }
.tray::before { content: ""; width: 1px; height: 16px; margin-right: -1px; background: #a00000; }
.chip { width: 16px; height: 16px; border-radius: 3px; color: #06204a; font-size: 13px; line-height: 15px; text-align: center; }
.buy { background: #2f8ee8; }
.all { background: #8c8c8c; color: #111; }
.bar { width: 1px; height: 16px; background: #a00000; }
.bar + svg { margin: 0 5px 0 4px; }
time { margin-left: 8px; font-family: "Liberation Mono", monospace; font-size: 13px; font-weight: bold; }
.grip { position: absolute; right: 2px; bottom: 1px; }
</style>
